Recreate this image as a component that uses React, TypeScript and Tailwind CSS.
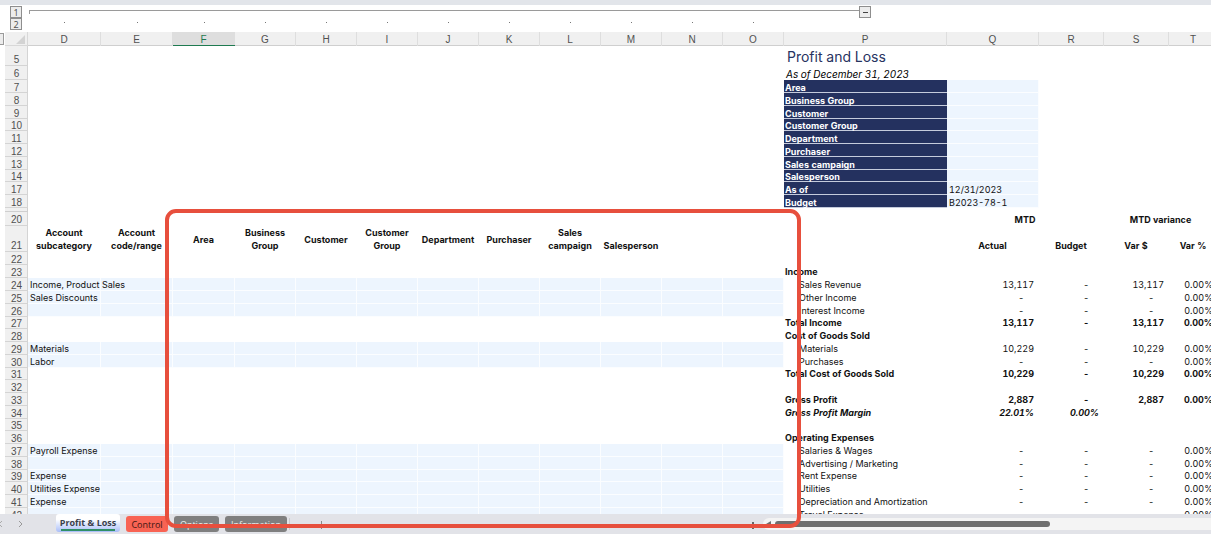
import React from "react";

type Line = {
  n: number;
  sub?: string;
  fill?: boolean;
  label?: string;
  style?: "head" | "item" | "total" | "margin";
  q?: string;
  r?: string;
  s?: string;
  t?: string;
};

const columns = ["D", "E", "F", "G", "H", "I", "J", "K", "L", "M", "N", "O", "P", "Q", "R", "S", "T"];
const outlined = columns.slice(0, 12);
const inputColumns = columns.slice(1, 12);

const filters: Line[] = [
  { n: 7, label: "Area" },
  { n: 8, label: "Business Group" },
  { n: 9, label: "Customer" },
  { n: 10, label: "Customer Group" },
  { n: 11, label: "Department" },
  { n: 12, label: "Purchaser" },
  { n: 13, label: "Sales campaign" },
  { n: 14, label: "Salesperson" },
  { n: 17, label: "As of", q: "12/31/2023" },
  { n: 18, label: "Budget", q: "B2023-78-1" },
];

const lines: Line[] = [
  { n: 22 },
  { n: 23, label: "Income", style: "head" },
  { n: 24, sub: "Income, Product Sales", fill: true, label: "Sales Revenue", style: "item", q: "13,117", r: "-", s: "13,117", t: "0.00%" },
  { n: 25, sub: "Sales Discounts", fill: true, label: "Other Income", style: "item", q: "-", r: "-", s: "-", t: "0.00%" },
  { n: 26, fill: true, label: "Interest Income", style: "item", q: "-", r: "-", s: "-", t: "0.00%" },
  { n: 27, label: "Total Income", style: "total", q: "13,117", r: "-", s: "13,117", t: "0.00%" },
  { n: 28, label: "Cost of Goods Sold", style: "head" },
  { n: 29, sub: "Materials", fill: true, label: "Materials", style: "item", q: "10,229", r: "-", s: "10,229", t: "0.00%" },
  { n: 30, sub: "Labor", fill: true, label: "Purchases", style: "item", q: "-", r: "-", s: "-", t: "0.00%" },
  { n: 31, label: "Total Cost of Goods Sold", style: "total", q: "10,229", r: "-", s: "10,229", t: "0.00%" },
  { n: 32 },
  { n: 33, label: "Gross Profit", style: "total", q: "2,887", r: "-", s: "2,887", t: "0.00%" },
  { n: 34, label: "Gross Profit Margin", style: "margin", q: "22.01%", r: "0.00%" },
  { n: 35 },
  { n: 36, label: "Operating Expenses", style: "head" },
  { n: 37, sub: "Payroll Expense", fill: true, label: "Salaries & Wages", style: "item", q: "-", r: "-", s: "-", t: "0.00%" },
  { n: 38, fill: true, label: "Advertising / Marketing", style: "item", q: "-", r: "-", s: "-", t: "0.00%" },
  { n: 39, sub: "Expense", fill: true, label: "Rent Expense", style: "item", q: "-", r: "-", s: "-", t: "0.00%" },
  { n: 40, sub: "Utilities Expense", fill: true, label: "Utilities", style: "item", q: "-", r: "-", s: "-", t: "0.00%" },
  { n: 41, sub: "Expense", fill: true, label: "Depreciation and Amortization", style: "item", q: "-", r: "-", s: "-", t: "0.00%" },
  { n: 42, fill: true, label: "Travel Expense", style: "item", q: "-", r: "-", s: "-", t: "0.00%" },
];

// Rows are 12.75px high on average, so every fourth one is a pixel shorter.
const shortRows = [10, 14, 27, 31, 35, 39];
const rowHeight = (n: number) => (shortRows.includes(n) ? "h-[12px]" : "h-[13px]");

const textStyle = {
  head: "font-bold",
  item: "",
  total: "font-bold",
  margin: "font-bold italic",
};

const filled = "bg-[#edf5fe] shadow-[inset_-1px_-1px_0_#fbfdff]";

function RowNumber({ n }: { n: number }) {
  return (
    <th
      scope="row"
      className="bg-[#f0f0f0] p-0 text-center align-bottom font-['Liberation_Sans',sans-serif] text-[10px] font-normal text-[#505050] not-italic shadow-[inset_-1px_-1px_0_#d4d4d4]"
    >
      {n}
    </th>
  );
}

function Amount({ value }: { value?: string }) {
  return <td className={value === "-" ? "pr-[15px] text-right" : "pr-[5px] text-right"}>{value}</td>;
}

function HeaderCell({ children, middle, span }: { children?: React.ReactNode; middle?: boolean; span?: number }) {
  return (
    <th
      colSpan={span}
      className={`p-0 pr-px text-center leading-[13px] font-bold whitespace-nowrap ${middle ? "align-middle" : "align-bottom"}`}
    >
      {children}
    </th>
  );
}

function OutlineBar() {
  const button = "flex h-3 w-3 shrink-0 items-center justify-center border border-[#8e8e8e] bg-[#ececec] leading-none text-[#555]";
  return (
    <div className="flex h-[27px] shrink-0 pt-px pl-[10px]">
      <div className="flex w-[18px] shrink-0 flex-col">
        <button aria-label="Outline level 1" className={`${button} text-[9px]`}>1</button>
        <button aria-label="Outline level 2" className={`${button} text-[9px]`}>2</button>
      </div>
      <div className="flex shrink-0 flex-col">
        <div className="flex h-3 items-start pl-px">
          <div className="mt-1 h-1 w-[830px] border-t border-l border-[#9a9a9a]" />
          <button aria-label="Collapse columns" className={button}>
            <span className="h-px w-[5px] bg-[#444]" />
          </button>
        </div>
        <div className="grid grid-cols-[73px_72px_62px_repeat(9,61px)] pt-1">
          {outlined.map((c) => (
            <span key={c} className="h-px w-px justify-self-center bg-[#777]" />
          ))}
        </div>
      </div>
    </div>
  );
}

function Sheet() {
  return (
    <table className="w-[1213px] shrink-0 table-fixed border-separate border-spacing-0 font-[Inter,sans-serif] text-[9px] leading-[12px] text-[#111] tabular-nums">
      <colgroup>
        <col className="w-[23px]" />
        <col className="w-[73px]" />
        <col className="w-[72px]" />
        <col className="w-[62px]" />
        {columns.slice(3, 12).map((c) => (
          <col key={c} className="w-[61px]" />
        ))}
        <col className="w-[163px]" />
        <col className="w-[92px]" />
        <col className="w-[65px]" />
        <col className="w-[65px]" />
        <col className="w-[49px]" />
      </colgroup>
      <thead>
        <tr className="h-[14px] font-['Liberation_Sans',sans-serif] text-[10px]">
          <td className="bg-[#f0f0f0] p-0 pr-[3px] align-bottom shadow-[inset_-1px_-1px_0_#d8d8d8]">
            <svg aria-hidden="true" viewBox="0 0 9 9" className="mb-[2px] ml-auto h-[9px] w-[9px] fill-[#d3d3d3]">
              <path d="M9 0V9H0Z" />
            </svg>
          </td>
          {columns.map((c) => (
            <th
              key={c}
              scope="col"
              className={
                c === "F"
                  ? "bg-[#dedede] p-0 pt-px pr-px text-center font-normal text-[#1e7a50] shadow-[inset_0_-1px_0_#1e7a50]"
                  : "bg-[#f0f0f0] p-0 pt-px pr-px text-center font-normal text-[#505050] shadow-[inset_-1px_0_0_#dedede,inset_0_-1px_0_#cfcfcf]"
              }
            >
              {c}
            </th>
          ))}
        </tr>
      </thead>
      <tbody className="whitespace-nowrap [&_td]:align-bottom">
        <tr className="h-5">
          <RowNumber n={5} />
          <td colSpan={12} />
          <td colSpan={5} className="pl-[3px] text-[14px] leading-[18px] text-[#27335f]">
            <h1>Profit and Loss</h1>
          </td>
        </tr>
        <tr className="h-[14px]">
          <RowNumber n={6} />
          <td colSpan={12} />
          <td colSpan={5} className="pl-[2px] text-[10px] text-black italic">As of December 31, 2023</td>
        </tr>
        {filters.map((f) => (
          <tr key={f.n} className={`leading-[10px] ${rowHeight(f.n)}`}>
            <RowNumber n={f.n} />
            <td colSpan={12} />
            <td className="bg-[#24315f] pl-px font-bold text-white shadow-[inset_0_-1px_0_#c5cbdc]">{f.label}</td>
            <td className={`pl-[2px] ${filled}`}>{f.q}</td>
          </tr>
        ))}
        <tr className="h-1">
          <th className="bg-[#f0f0f0] p-0 shadow-[inset_-1px_-1px_0_#cfcfcf]" />
          <td colSpan={17} className="p-0" />
        </tr>
        <tr className="h-[14px]">
          <RowNumber n={20} />
          <td colSpan={13} />
          <HeaderCell span={2}>MTD</HeaderCell>
          <HeaderCell span={2}>MTD variance</HeaderCell>
        </tr>
        <tr className="h-[26px]">
          <RowNumber n={21} />
          <HeaderCell>Account<br />subcategory</HeaderCell>
          <HeaderCell>Account<br />code/range</HeaderCell>
          <HeaderCell middle>Area</HeaderCell>
          <HeaderCell>Business<br />Group</HeaderCell>
          <HeaderCell middle>Customer</HeaderCell>
          <HeaderCell>Customer<br />Group</HeaderCell>
          <HeaderCell middle>Department</HeaderCell>
          <HeaderCell middle>Purchaser</HeaderCell>
          <HeaderCell>Sales<br />campaign</HeaderCell>
          <HeaderCell>Salesperson</HeaderCell>
          <td colSpan={3} />
          <HeaderCell>Actual</HeaderCell>
          <HeaderCell>Budget</HeaderCell>
          <HeaderCell>Var $</HeaderCell>
          <HeaderCell>Var %</HeaderCell>
        </tr>
        {lines.map((l) => (
          <tr key={l.n} className={`[&_td]:pb-px leading-[11px] ${rowHeight(l.n)} ${textStyle[l.style ?? "item"]}`}>
            <RowNumber n={l.n} />
            <td className={`pl-[2px] ${l.fill ? filled : ""}`}>{l.sub}</td>
            {inputColumns.map((c) => (
              <td key={c} className={l.fill ? filled : ""} />
            ))}
            <td className={l.style === "item" ? "pl-[15px]" : "pl-px"}>{l.label}</td>
            <Amount value={l.q} />
            <Amount value={l.r} />
            <Amount value={l.s} />
            <Amount value={l.t} />
          </tr>
        ))}
      </tbody>
    </table>
  );
}

function TabBar() {
  const tab = "h-4 rounded-[3px] text-center text-[9px] leading-[17px]";
  return (
    <footer className="flex h-5 shrink-0 items-start bg-[#e2e3e8] font-['Open_Sans',sans-serif]">
      <div className="flex w-14 shrink-0 items-center gap-[14px] pt-[6px]">
        <button aria-label="Previous sheet" className="w-1 overflow-hidden">
          <svg viewBox="0 0 4 8" className="h-2 w-1 fill-none stroke-[#aaa]"><path d="M2 1L-1 4L2 7" /></svg>
        </button>
        <button aria-label="Next sheet">
          <svg viewBox="0 0 5 8" className="h-2 w-[5px] fill-none stroke-[#999]"><path d="M1 1L4 4L1 7" /></svg>
        </button>
      </div>
      <div role="tablist" className="flex shrink-0 items-start">
        <button
          role="tab"
          aria-selected="true"
          className="h-[18px] w-16 rounded-[3px] bg-linear-to-b from-white from-30% to-[#a9bdf8] px-[5px] text-[9px] leading-[16px] font-bold whitespace-nowrap text-[#3a3f4c]"
        >
          <span className="flex h-4 justify-center border-b-2 border-[#2f8f67]">Profit &amp; Loss</span>
        </button>
        <div className="flex gap-[6px] pt-[2px] pl-[6px]">
          <button role="tab" aria-selected="false" className={`${tab} w-[42px] bg-[#f86353] text-[#3d1512]`}>Control</button>
          <button role="tab" aria-selected="false" className={`${tab} w-[45px] bg-[#7f7f7f] text-[#eee]`}>Options</button>
          <button role="tab" aria-selected="false" className={`${tab} w-[62px] bg-[#7f7f7f] text-[#eee]`}>Information</button>
        </div>
      </div>
      <div className="mt-1 ml-[2px] h-3 w-px bg-[#c8c9ce]" />
      <button aria-label="New sheet" className="mt-[7px] ml-[26px]">
        <svg viewBox="0 0 10 10" className="h-[10px] w-[10px] fill-none stroke-[#8a8a8a]"><path d="M5.500 0V8M1 4.500H9" /></svg>
      </button>
      <div className="mt-2 ml-auto flex w-[459px] shrink-0 items-start gap-[9px]">
        <div className="flex w-[2px] flex-col gap-[3px]">
          <span className="h-[2px] w-[2px] bg-[#666]" />
          <span className="h-[2px] w-[2px] bg-[#666]" />
        </div>
        <div className="-mt-1 flex h-3 flex-1 items-center gap-1 rounded-l-full bg-[#f4f4f4] pl-[3px]">
          <svg aria-hidden="true" viewBox="0 0 5 6" className="h-[6px] w-[5px] fill-[#6e6e6e]"><path d="M5 0V6L0 3Z" /></svg>
          <span className="h-[6px] w-[275px] rounded-full bg-[#6e6e6e]" />
        </div>
      </div>
    </footer>
  );
}

export default function App() {
  return (
    <div className="relative flex h-screen w-full flex-col overflow-hidden bg-white">
      <div className="h-[5px] shrink-0 bg-[#e2e5ea]" />
      <OutlineBar />
      <main className="flex min-h-0 flex-1 items-start overflow-hidden">
        <div className="w-[5px] shrink-0 pt-px">
          <div className="h-3 w-1 border-y border-r border-[#9a9a9a] bg-[#ececec]" />
        </div>
        <Sheet />
      </main>
      <TabBar />
      <div className="pointer-events-none absolute top-[209px] left-[165px] h-[319px] w-[636px] rounded-[11px] border-4 border-[#e74f3d]" />
    </div>
  );
}
